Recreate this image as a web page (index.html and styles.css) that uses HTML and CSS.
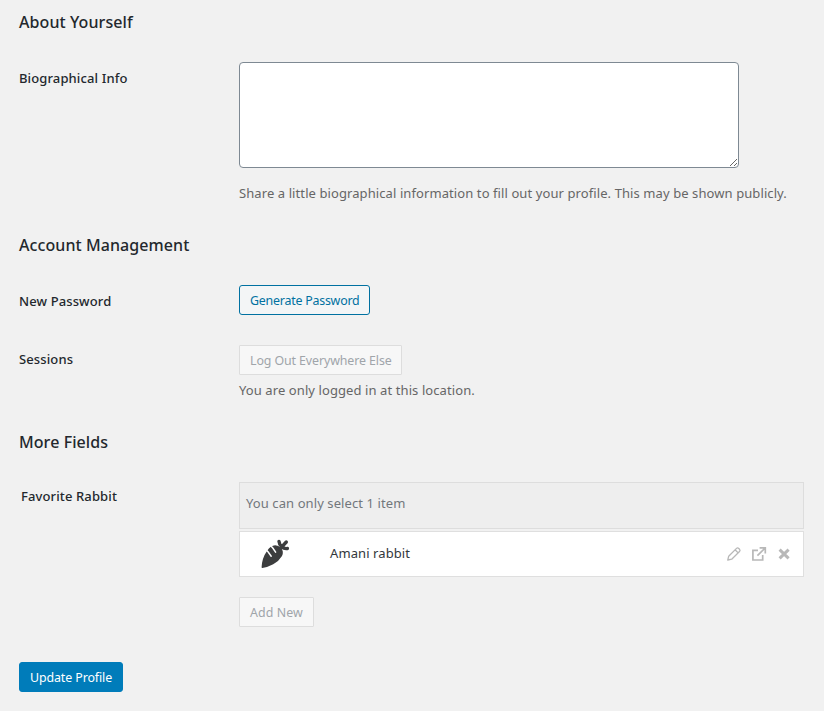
FILE: index.html
```html
<!DOCTYPE html>
<html lang="en">
<head>
<meta charset="utf-8">
<title>Profile</title>
<link rel="stylesheet" href="styles.css">
</head>
<body>
<form class="profile">
  <section class="section about">
    <h2>About Yourself</h2>
    <div class="row">
      <label class="label" for="bio">Biographical Info</label>
      <div class="field">
        <textarea id="bio"></textarea>
        <p class="description share">Share a little biographical information to fill out your profile. This may be shown publicly.</p>
      </div>
    </div>
  </section>
  <section class="section account">
    <h2>Account Management</h2>
    <div class="row password">
      <span class="label">New Password</span>
      <div class="field"><button type="button" class="button generate">Generate Password</button></div>
    </div>
    <div class="row">
      <span class="label">Sessions</span>
      <div class="field">
        <button type="button" class="button logout" disabled>Log Out Everywhere Else</button>
        <p class="description">You are only logged in at this location.</p>
      </div>
    </div>
  </section>
  <section class="section more">
    <h2>More Fields</h2>
    <div class="row">
      <span class="label favorite">Favorite Rabbit</span>
      <div class="field picker">
        <div class="notice">You can only select 1 item</div>
        <div class="item">
          <svg class="carrot" viewBox="0 0 30 30" width="30" height="30">
            <path fill="#3c3d3e" d="M1.6 28.2Q2 19 7 12Q10.6 6.4 15.2 6.2Q18.6 6.2 20.9 8.7Q24.2 12.4 22 16.9Q19 22 13.2 25.2Q8.2 28 2.3 28.9Q1.6 29 1.6 28.2Z"/>
            <path fill="none" stroke="#fff" stroke-width="1.5" stroke-linecap="round" d="M5.6 10.4L8.2 13L11.2 17.2M10.2 6.2L12.8 9L15.6 13.2"/>
            <path fill="none" stroke="#3c3d3e" stroke-width="3.4" stroke-linecap="round" d="M20.6 9.2L26.3 3M21.8 7.9Q19.2 5.4 19 2.4M21.8 7.9Q24.2 10 27.4 9.5"/>
          </svg>
          <span class="name">Amani rabbit</span>
          <div class="actions">
            <svg viewBox="0 0 16 16" width="16" height="16" fill="none" stroke="#b8b8b8" stroke-width="1.3" stroke-linejoin="round"><path d="M1.8 14L2.7 10.2L10.5 2.4Q11.6 1.3 12.8 2.5L13.5 3.2Q14.6 4.4 13.5 5.5L5.7 13.2ZM9.1 3.8L12.1 6.9"/></svg>
            <svg viewBox="0 0 16 16" width="16" height="16" fill="none" stroke="#b8b8b8" stroke-width="1.7"><path d="M7 4.3H1.9V14H11.7V9M8.6 1.8H14.3V7.5M13.9 2.2L6.4 9.7"/></svg>
            <svg viewBox="0 0 16 16" width="16" height="16" fill="none" stroke="#b8b8b8" stroke-width="3"><path d="M3.6 3.6L12.6 12.4M12.6 3.6L3.6 12.4"/></svg>
          </div>
        </div>
        <button type="button" class="button add" disabled>Add New</button>
      </div>
    </div>
  </section>
  <button type="button" class="button primary">Update Profile</button>
</form>
</body>
</html>
```
FILE: styles.css
```css
* { box-sizing: border-box; }
body {
  margin: 0;
  background: #f1f1f1;
  color: #23282d;
  font: 13px/20px "Noto Sans", sans-serif;
  letter-spacing: 0.09px;
}
.profile { padding: 10px 20px 0 19px; height: 711px; overflow: hidden; }
h2 { margin: 0; font-size: 16px; line-height: 24px; font-weight: 500; letter-spacing: 0.08px; }
.about { height: 223px; }
.account { height: 197px; }
.more { height: 232px; }
.row { display: grid; grid-template-columns: 220px 1fr; margin-top: 28px; }
.password + .row { margin-top: 30px; }
.label { font-weight: 500; padding-top: 6px; line-height: 20px; letter-spacing: 0.12px; }
.password + .row .label { padding-top: 4px; }
.label.favorite { padding-left: 2px; padding-top: 4px; }
textarea {
  display: block;
  width: 500px;
  height: 106px;
  border: 1px solid #7e8993;
  border-radius: 4px;
  background: #fff;
  resize: both;
}
.description { margin: 5px 0 0; color: #666; white-space: nowrap; }
.description.share { margin-top: 15px; }
.button {
  display: block;
  height: 30px;
  padding: 2px 10px 0;
  border: 1px solid #0071a1;
  border-radius: 3px;
  background: #f3f5f6;
  color: #0071a1;
  font: 12.4px/26px "Noto Sans", sans-serif;
  white-space: nowrap;
  text-align: left;
  letter-spacing: -0.1px;
}
.generate { width: 131px; letter-spacing: -0.22px; }
.button:disabled { border-color: #ddd; background: #f7f7f7; color: #a0a5aa; border-radius: 1px; }
.logout { width: 163px; }
.add { width: 75px; margin-top: 20px; letter-spacing: 0.08px; }
.primary { width: 104px; background: #007cba; border-color: #007cba; color: #fff; }
.notice { height: 47px; border: 1px solid #ddd; background: #eee; padding: 10px 6px; color: #72777c; }
.item { display: flex; align-items: center; height: 46px; margin-top: 2px; border: 1px solid #dfdfdf; background: #fff; padding: 0 11px 0 20px; color: #32373c; }
.name { margin-left: 40px; padding-bottom: 2px; }
.actions { display: flex; gap: 9px; margin-left: auto; }
.actions svg { display: block; }
```
